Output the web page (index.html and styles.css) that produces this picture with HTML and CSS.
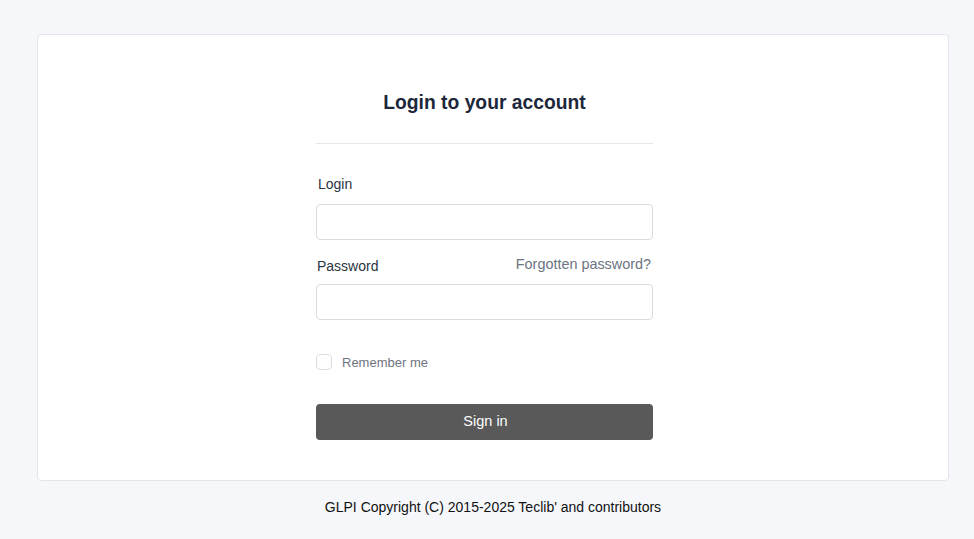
FILE: index.html
```html
<!DOCTYPE html>
<html lang="en">
<head>
<meta charset="utf-8">
<title>GLPI - Login</title>
<link rel="stylesheet" href="styles.css">
</head>
<body>
<div class="page">
  <div class="card">
    <form class="login-form">
      <h2 class="title">Login to your account</h2>
      <hr class="sep">
      <label class="label" for="login">Login</label>
      <input class="input" id="login" type="text">
      <div class="pw-row">
        <label class="label pw-label" for="pass">Password</label>
        <a class="forgot" href="#">Forgotten password?</a>
      </div>
      <input class="input pw-input" id="pass" type="password">
      <label class="remember">
        <span class="check"></span>
        <span class="remember-text">Remember me</span>
      </label>
      <button class="btn" type="button">Sign in</button>
    </form>
  </div>
  <div class="footer">GLPI Copyright (C) 2015-2025 Teclib' and contributors</div>
</div>
</body>
</html>
```
FILE: styles.css
```css
html, body {
  margin: 0;
  padding: 0;
  background: #f5f7fb;
  font-family: "Liberation Sans", Arial, sans-serif;
}
.page {
  padding: 34px 25px 0 37px;
}
.card {
  background: #ffffff;
  border: 1px solid #e3e5e8;
  border-radius: 4px;
  padding: 56px 0 40px 0;
}
.login-form {
  width: 337px;
  margin-left: 278px;
  display: flex;
  flex-direction: column;
}
.title {
  margin: 0;
  font-size: 19.3px;
  line-height: 24px;
  font-weight: 700;
  color: #1d273b;
  text-align: center;
}
.sep {
  margin: 28px 0 0 0;
  border: 0;
  border-top: 1px solid #e6e7e9;
  height: 0;
}
.label {
  display: block;
  margin: 30px 0 0 2px;
  font-size: 14px;
  line-height: 20px;
  color: #2b3442;
}
.input {
  box-sizing: border-box;
  margin: 10px 0 0 0;
  height: 36px;
  width: 100%;
  border: 1px solid #dadcde;
  border-radius: 4px;
  background: #fff;
  padding: 0 12px;
  font-family: inherit;
  font-size: 14px;
}
.pw-row {
  display: flex;
  justify-content: space-between;
  align-items: flex-start;
  margin-top: 14px;
}
.pw-label {
  margin: 2px 0 0 1px;
}
.forgot {
  font-size: 14.4px;
  line-height: 20px;
  color: #6b7380;
  text-decoration: none;
  margin-right: 2px;
}
.pw-input {
  margin-top: 8px;
}
.remember {
  display: flex;
  align-items: center;
  margin-top: 34px;
  height: 16px;
}
.check {
  box-sizing: border-box;
  width: 16px;
  height: 16px;
  border: 1px solid #dadcde;
  border-radius: 4px;
  background: #fff;
}
.remember-text {
  margin-left: 10px;
  padding-top: 2px;
  font-size: 13px;
  line-height: 16px;
  color: #6e7480;
}
.btn {
  margin-top: 34px;
  height: 36px;
  width: 100%;
  border: 0;
  border-radius: 4px;
  background: #595959;
  color: #ffffff;
  font-family: inherit;
  font-size: 14.5px;
  line-height: 18px;
  padding: 0 0 3px 2px;
  cursor: pointer;
}
.footer {
  margin-top: 16px;
  text-align: center;
  font-size: 14px;
  line-height: 20px;
  color: #111111;
}
```
